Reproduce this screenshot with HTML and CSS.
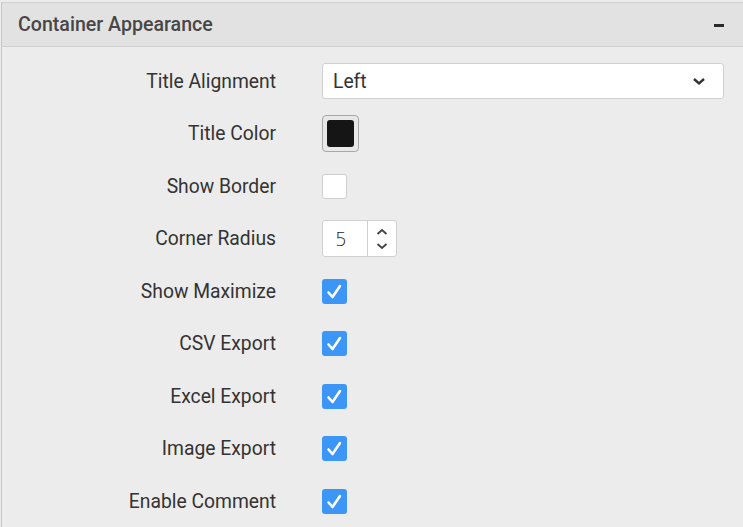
FILE: index.html
```html
<!DOCTYPE html>
<html>
<head>
<meta charset="utf-8">
<link rel="stylesheet" href="styles.css">
</head>
<body>
<div class="panel">
  <div class="header">
    <span class="title">Container Appearance</span>
    <span class="collapse"></span>
  </div>
  <div class="body">
    <div class="row">
      <div class="label">Title Alignment</div>
      <div class="control">
        <div class="select">
          <span>Left</span>
          <svg class="chev" width="14" height="9" viewBox="0 0 14 9"><path d="M2 2 L7 6.5 L12 2" fill="none" stroke="#333" stroke-width="2.4"/></svg>
        </div>
      </div>
    </div>
    <div class="row">
      <div class="label">Title Color</div>
      <div class="control"><div class="swatch"><div class="swatch-inner"></div></div></div>
    </div>
    <div class="row">
      <div class="label">Show Border</div>
      <div class="control"><div class="cb"></div></div>
    </div>
    <div class="row">
      <div class="label">Corner Radius</div>
      <div class="control">
        <div class="num">
          <span class="num-val">5</span>
          <span class="spin">
            <svg width="14" height="28" viewBox="0 0 14 28"><path d="M2.5 9 L7 5 L11.5 9" fill="none" stroke="#444" stroke-width="1.8"/><path d="M2.5 19 L7 23 L11.5 19" fill="none" stroke="#444" stroke-width="1.8"/></svg>
          </span>
        </div>
      </div>
    </div>
    <div class="row">
      <div class="label">Show Maximize</div>
      <div class="control"><div class="cb on"><svg width="25" height="25" viewBox="0 0 25 25"><path d="M6.5 13.5 L10.5 18 L18 7" fill="none" stroke="#fff" stroke-width="2.6" stroke-linecap="round" stroke-linejoin="round"/></svg></div></div>
    </div>
    <div class="row">
      <div class="label">CSV Export</div>
      <div class="control"><div class="cb on"><svg width="25" height="25" viewBox="0 0 25 25"><path d="M6.5 13.5 L10.5 18 L18 7" fill="none" stroke="#fff" stroke-width="2.6" stroke-linecap="round" stroke-linejoin="round"/></svg></div></div>
    </div>
    <div class="row">
      <div class="label">Excel Export</div>
      <div class="control"><div class="cb on"><svg width="25" height="25" viewBox="0 0 25 25"><path d="M6.5 13.5 L10.5 18 L18 7" fill="none" stroke="#fff" stroke-width="2.6" stroke-linecap="round" stroke-linejoin="round"/></svg></div></div>
    </div>
    <div class="row">
      <div class="label">Image Export</div>
      <div class="control"><div class="cb on"><svg width="25" height="25" viewBox="0 0 25 25"><path d="M6.5 13.5 L10.5 18 L18 7" fill="none" stroke="#fff" stroke-width="2.6" stroke-linecap="round" stroke-linejoin="round"/></svg></div></div>
    </div>
    <div class="row">
      <div class="label">Enable Comment</div>
      <div class="control"><div class="cb on"><svg width="25" height="25" viewBox="0 0 25 25"><path d="M6.5 13.5 L10.5 18 L18 7" fill="none" stroke="#fff" stroke-width="2.6" stroke-linecap="round" stroke-linejoin="round"/></svg></div></div>
    </div>
  </div>
</div>
</body>
</html>
```
FILE: styles.css
```css
html, body {
  margin: 0;
  padding: 0;
  background: #ececec;
  font-family: Roboto, "Liberation Sans", sans-serif;
  overflow: hidden;
}
.panel {
  margin-top: 2px;
  margin-left: 1px;
  border-top: 1px solid #d2d2d2;
  border-left: 1px solid #c8c8c8;
  height: 525px;
  box-sizing: border-box;
}
.header {
  height: 44px;
  box-sizing: border-box;
  background: #e2e2e2;
  border-bottom: 1px solid #d0d0d0;
  display: flex;
  align-items: center;
  justify-content: space-between;
  padding: 0 19px 0 16px;
}
.title {
  font-size: 19.6px;
  font-weight: 500;
  color: #474747;
}
.collapse {
  width: 10px;
  height: 3px;
  background: #2a2a2a;
  margin-top: 1px;
}
.body {
  padding-top: 8px;
}
.row {
  display: flex;
  align-items: center;
  height: 52.5px;
}
.label {
  width: 274px;
  text-align: right;
  font-size: 19.3px;
  color: #333;
  flex: none;
}
.control {
  margin-left: 46px;
  display: flex;
  align-items: center;
}
.select {
  width: 402px;
  height: 36px;
  box-sizing: border-box;
  background: #fff;
  border: 1px solid #d0d0d0;
  border-radius: 3px;
  display: flex;
  align-items: center;
  justify-content: space-between;
  padding: 0 17px 0 10px;
  font-size: 19.3px;
  color: #333;
}
.chev { display: block; margin-top: 1px; }
.swatch {
  width: 37px;
  height: 37px;
  box-sizing: border-box;
  border: 1px solid #a8a8a8;
  border-radius: 4px;
  background: #e8e8e8;
  display: flex;
  align-items: center;
  justify-content: center;
}
.swatch-inner {
  width: 27px;
  height: 27px;
  background: #151515;
  border-radius: 3px;
}
.cb {
  width: 25px;
  height: 25px;
  box-sizing: border-box;
  border: 1px solid #cfcfcf;
  border-radius: 3px;
  background: #fff;
}
.cb.on {
  background: #3c96f7;
  border: none;
  display: flex;
  align-items: center;
  justify-content: center;
}
.cb.on svg { display: block; }
.num {
  width: 75px;
  height: 37px;
  box-sizing: border-box;
  border: 1px solid #d0d0d0;
  border-radius: 3px;
  background: #fff;
  display: flex;
}
.num-val {
  width: 45px;
  box-sizing: border-box;
  border-right: 1px solid #d0d0d0;
  font-family: "DejaVu Sans", sans-serif;
  font-weight: 300;
  font-size: 19px;
  color: #222;
  display: flex;
  align-items: center;
  padding-left: 12px;
}
.spin {
  flex: 1;
  display: flex;
  align-items: center;
  justify-content: center;
}
.spin svg { display: block; }
```
